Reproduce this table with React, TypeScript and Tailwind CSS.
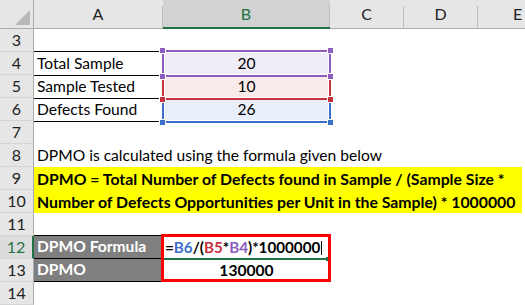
import React from "react";

const PURPLE = "#8B5DBF";
const RED = "#C8323F";
const BLUE = "#3B6FC9";

const RowHead = ({ n, active }: { n: number; active?: boolean }) => (
  <div
    className={
      "w-[34px] shrink-0 flex items-center justify-center border-b border-[#D4D4D4] text-[16px] " +
      (active
        ? "bg-[#DCDCDC] text-[#217346] border-r-2 border-r-[#217346]"
        : "bg-[#E6E6E6] text-[#222] border-r border-r-[#ABABAB]")
    }
  >
    {n}
  </div>
);

const ColHead = ({ label, w, active }: { label: string; w: string; active?: boolean }) => (
  <div
    className={
      "flex shrink-0 " +
      w +
      (active ? " bg-[#D2D2D2] border-b-2 border-[#217346]" : " bg-[#E6E6E6] border-b border-[#ABABAB]")
    }
  >
    <div
      className={
        "flex-1 flex items-center justify-center text-[16px] " +
        (active ? "text-[#217346]" : "text-[#222]")
      }
    >
      {label}
    </div>
    <div className="w-px mt-[6px] bg-[#BDBDBD]" />
  </div>
);

const Handle = ({ color, pos }: { color: string; pos: string }) => (
  <div
    className={"absolute w-[7px] h-[7px] border border-white " + pos}
    style={{ backgroundColor: color }}
  />
);

const RangeCell = ({
  value,
  color,
  fill,
  z,
  top,
}: {
  value: string;
  color: string;
  fill: string;
  z: string;
  top?: boolean;
}) => (
  <div className={"relative w-[167px] shrink-0 flex items-center justify-center " + z} style={{ backgroundColor: fill }}>
    <div
      className="absolute -top-[2px] -left-[1px] -right-[1px] -bottom-[2px] border-2 shadow-[inset_0_0_0_1px_white]"
      style={{ borderColor: color }}
    />
    {top && <Handle color={color} pos="-top-[5px] -left-[4px]" />}
    {top && <Handle color={color} pos="-top-[5px] -right-[4px]" />}
    <Handle color={color} pos="-bottom-[5px] -left-[4px]" />
    <Handle color={color} pos="-bottom-[5px] -right-[4px]" />
    <span className="relative">{value}</span>
  </div>
);

export default function App() {
  return (
    <div className="w-[525px] h-[305px] overflow-hidden bg-white text-black [font-family:Lato,'Liberation_Sans',sans-serif] text-[15.6px] leading-none">
      {/* column headers */}
      <div className="flex h-[29px]">
        <div className="w-[34px] shrink-0 bg-[#E6E6E6] border-r border-b border-[#ABABAB] flex items-end justify-end pr-[3px] pb-[3px]">
          <svg width="15" height="15" viewBox="0 0 15 15">
            <polygon points="15,0 15,15 0,15" fill="#B9B9B9" />
          </svg>
        </div>
        <ColHead label="A" w="w-[129px]" />
        <ColHead label="B" w="w-[167px]" active />
        <ColHead label="C" w="w-[74px]" />
        <ColHead label="D" w="w-[74px]" />
        <ColHead label="E" w="w-[80px]" />
      </div>

      <div className="flex h-[23px]">
        <RowHead n={3} />
      </div>

      {[
        { n: 4, label: "Total Sample", value: "20", color: PURPLE, fill: "#F0ECF8", z: "z-30", top: true },
        { n: 5, label: "Sample Tested", value: "10", color: RED, fill: "#F9EAEA", z: "z-20" },
        { n: 6, label: "Defects Found", value: "26", color: BLUE, fill: "#E8EFF8", z: "z-10" },
      ].map((r) => (
        <div key={r.n} className="flex h-[23px]">
          <RowHead n={r.n} />
          <div className="w-[129px] shrink-0 flex items-center pl-[3px] border-b border-black -mb-px relative">
            {r.label}
            {r.n === 4 && <div className="absolute left-0 right-0 -top-[1px] h-px bg-black" />}
          </div>
          <RangeCell value={r.value} color={r.color} fill={r.fill} z={r.z} top={r.top} />
        </div>
      ))}

      <div className="flex h-[23px]">
        <RowHead n={7} />
      </div>

      <div className="flex h-[23px]">
        <RowHead n={8} />
        <div className="flex items-center pl-[3px] whitespace-nowrap">
          DPMO is calculated using the formula given below
        </div>
      </div>

      <div className="flex h-[23px]">
        <RowHead n={9} />
        <div className="w-[488px] bg-[#FFFF00] flex items-center pl-[3px] whitespace-nowrap font-bold text-[15.8px]">
          DPMO = Total Number of Defects found in Sample / (Sample Size *
        </div>
      </div>
      <div className="flex h-[23px]">
        <RowHead n={10} />
        <div className="w-[488px] bg-[#FFFF00] flex items-center pl-[3px] whitespace-nowrap font-bold text-[15.8px]">
          Number of Defects Opportunities per Unit in the Sample) * 1000000
        </div>
      </div>

      <div className="flex h-[23px]">
        <RowHead n={11} />
      </div>

      <div className="flex h-[23px]">
        <RowHead n={12} active />
        <div className="w-[129px] shrink-0 flex items-center pl-[3px] bg-[#7F7F7F] text-white font-bold border-y border-black -mt-px h-[24px]">
          DPMO Formula
        </div>
        <div className="relative w-[167px] shrink-0 flex items-center pl-[2px] font-bold text-[15.2px]">
          <span>=</span>
          <span style={{ color: BLUE }}>B6</span>
          <span>/(</span>
          <span style={{ color: RED }}>B5</span>
          <span>*</span>
          <span style={{ color: PURPLE }}>B4</span>
          <span>)*1000000</span>
          <span className="w-px h-[14px] bg-black ml-px" />
          <div className="absolute left-[1px] right-[3px] -bottom-px h-[2px] bg-[#217346]" />
          <div className="absolute right-[0px] -bottom-[2px] w-[4px] h-[4px] bg-[#217346]" />
          <div className="absolute -left-[2px] -top-[2px] w-[170px] h-[48px] border-[3px] border-[#FF0000] z-40" />
        </div>
      </div>

      <div className="flex h-[23px]">
        <RowHead n={13} />
        <div className="w-[129px] shrink-0 flex items-center pl-[3px] bg-[#7F7F7F] text-white font-bold border-b border-black">
          DPMO
        </div>
        <div className="w-[167px] shrink-0 flex items-center justify-center font-bold">130000</div>
      </div>

      <div className="flex h-[23px]">
        <RowHead n={14} />
      </div>
    </div>
  );
}
